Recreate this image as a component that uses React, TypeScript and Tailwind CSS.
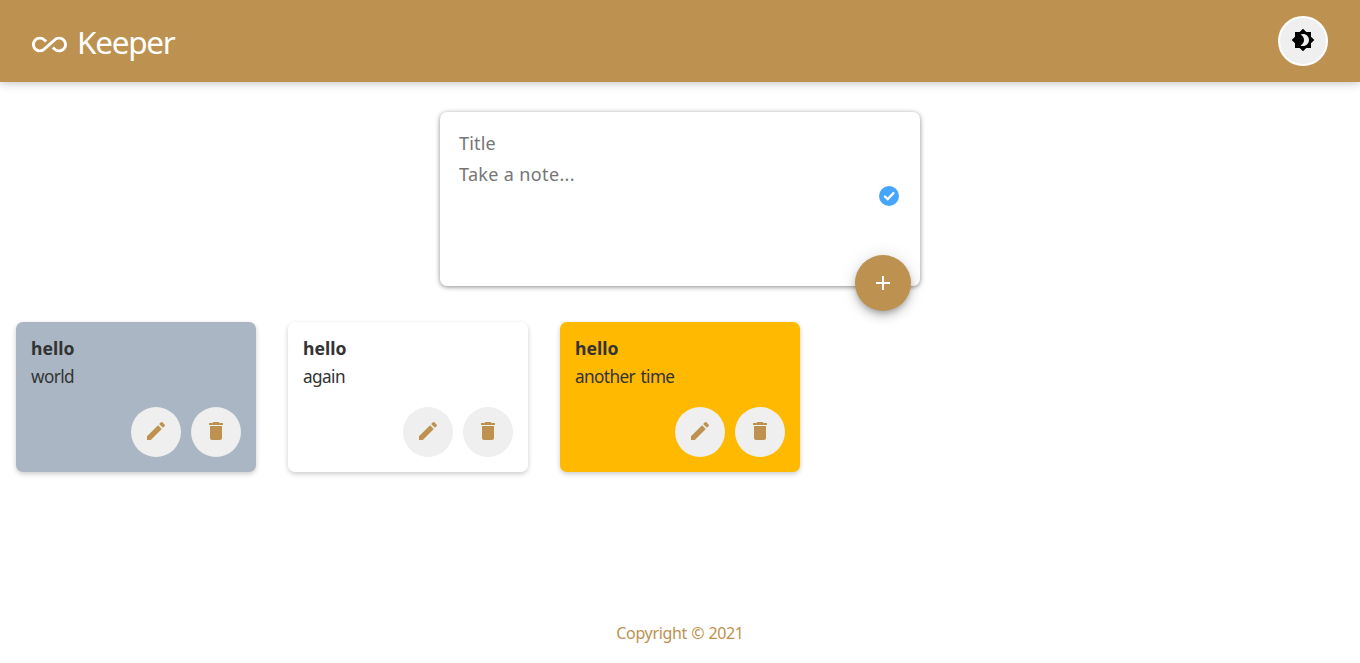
import type { ReactNode } from "react";
import { MdAdd, MdAllInclusive, MdBrightness4, MdDelete, MdEdit } from "react-icons/md";

type Note = { title: string; content: string; color: string };

const notes: Note[] = [
  { title: "hello", content: "world", color: "bg-[#aab6c3]" },
  { title: "hello", content: "again", color: "bg-white" },
  { title: "hello", content: "another time", color: "bg-[#ffb900]" },
];

function CheckedCircle({ className }: { className: string }) {
  return (
    <svg viewBox="0 0 24 24" className={className}>
      <circle cx="12" cy="12" r="10" fill="currentColor" />
      <path d="M7.9 12.5 10.7 15.1 16.4 9.1" fill="none" stroke="#fff" strokeWidth="2.3" strokeLinecap="round" />
    </svg>
  );
}

function RoundButton({ label, children }: { label: string; children: ReactNode }) {
  return (
    <button aria-label={label} className="flex size-[50px] items-center justify-center rounded-full bg-[#efefef] pb-0.5 text-[#bd914f]">
      {children}
    </button>
  );
}

function NoteCard({ note }: { note: Note }) {
  return (
    <article className={`flex h-[150px] w-60 flex-col justify-between rounded-[7px] px-[15px] pt-3.5 pb-[15px] text-[#333] shadow-[0_2px_5px_#ccc] ${note.color}`}>
      <div>
        <h1 className="h-[27px] text-[17.6px] leading-[24px] font-bold">{note.title}</h1>
        <p className="text-[17.2px] leading-[28px] tracking-[-0.6px] [word-spacing:1.5px]">{note.content}</p>
      </div>
      <div className="flex justify-end gap-2.5">
        <RoundButton label="Edit"><MdEdit size={24} /></RoundButton>
        <RoundButton label="Delete"><MdDelete size={24} /></RoundButton>
      </div>
    </article>
  );
}

export default function App() {
  return (
    <div className="flex h-[663px] flex-col bg-white font-['Noto_Sans',sans-serif]">
      <header className="flex h-[82px] shrink-0 items-center justify-between bg-[#bd914f] px-8 shadow-[0_0_10px_0_rgba(0,0,0,0.3)]">
        <h1 className="flex items-center gap-2.5 text-white">
          <MdAllInclusive size={35} className="mt-[7px]" />
          <span className="mt-0.5 text-[31.5px] leading-10 tracking-[-1.3px]">Keeper</span>
        </h1>
        <button aria-label="Toggle theme" className="flex size-[50px] items-center justify-center rounded-full border-2 border-white bg-[#efefef] pb-0.5 text-black">
          <MdBrightness4 size={24} />
        </button>
      </header>

      <main className="flex flex-1 flex-col">
        <form className="relative mx-auto mt-[30px] h-[174px] w-[480px] shrink-0 rounded-[7px] bg-white px-[19px] pt-[15px] shadow-[0_1px_5px_#8a8a8a]">
          <input placeholder="Title" className="mb-px block h-[31px] w-full text-[18px] tracking-[0.2px] outline-none placeholder:text-[#757575]" />
          <textarea placeholder="Take a note..." className="block h-20 w-[400px] resize-none text-[18px] leading-[31px] tracking-[0.35px] outline-none placeholder:text-[#757575]" />
          <CheckedCircle className="absolute top-[72px] right-[19px] size-6 text-[#45a5ff]" />
          <button type="button" aria-label="Add" className="absolute right-[9px] -bottom-[25px] flex size-14 items-center justify-center rounded-full bg-[#bd914f] text-white shadow-[0_3px_5px_-1px_rgba(0,0,0,0.2),0_6px_10px_0_rgba(0,0,0,0.14),0_1px_18px_0_rgba(0,0,0,0.12)]">
            <MdAdd size={24} />
          </button>
        </form>

        <section className="mt-9 flex gap-8 px-4">
          {notes.map((note) => (
            <NoteCard key={note.content} note={note} />
          ))}
        </section>
      </main>

      <footer className="flex h-[60px] items-center justify-center text-[16px] tracking-[-0.35px] text-[#bd914f] [word-spacing:0.5px]">
        Copyright © 2021
      </footer>
    </div>
  );
}
